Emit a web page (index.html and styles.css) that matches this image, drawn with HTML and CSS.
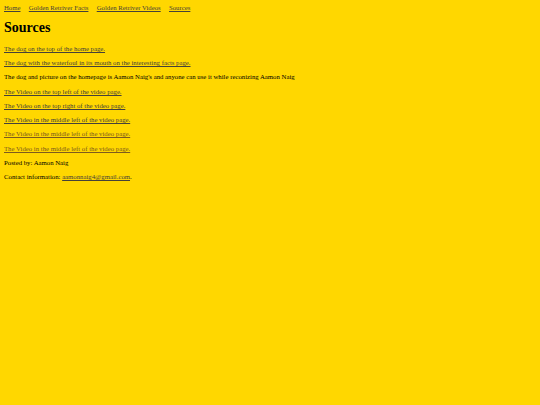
FILE: index.html
```html
<!DOCTYPE html>
<html>
<head>
<meta charset="utf-8">
<title>Sources</title>
<link rel="stylesheet" href="styles.css">
</head>
<body>
<nav class="nav">
<a href="#">Home</a>
<a href="#">Golden Retriver Facts</a>
<a href="#">Golden Retriver Videos</a>
<a href="#">Sources</a>
</nav>
<h1 class="title">Sources</h1>
<p class="item"><a href="#">The dog on the top of the home page.</a></p>
<p class="item"><a href="#">The dog with the waterfoul in its mouth on the interesting facts page.</a></p>
<p class="item">The dog and picture on the homepage is Aamon Naig's and anyone can use it while reconizing Aamon Naig</p>
<p class="item"><a href="#">The Video on the top left of the video page.</a></p>
<p class="item"><a href="#">The Video on the top right of the video page.</a></p>
<p class="item"><a href="#">The Video in the middle left of the video page.</a></p>
<p class="item"><a class="visited" href="#">The Video in the middle left of the video page.</a></p>
<p class="item"><a class="visited" href="#">The Video in the middle left of the video page.</a></p>
<p class="item">Posted by: Aamon Naig</p>
<p class="item">Contact information: <a href="#">aamonnaig4@gmail.com</a>.</p>
</body>
</html>
```
FILE: styles.css
```css
html {
  background: #ffd700;
}
body {
  margin: 4px;
  font-family: "Liberation Serif", "Times New Roman", serif;
  font-size: 6.75px;
  line-height: 7.6px;
  color: #000;
}
a {
  color: #45413a;
  text-decoration: underline;
  text-decoration-skip-ink: none;
  text-decoration-thickness: 0.6px;
}
a.visited {
  color: #7d5a1e;
}
.nav {
  display: flex;
  gap: 8.3px;
}
.title {
  font-size: 14px;
  line-height: 16px;
  margin: 8px 0 9px;
}
.item {
  margin: 6.73px 0;
}
```
